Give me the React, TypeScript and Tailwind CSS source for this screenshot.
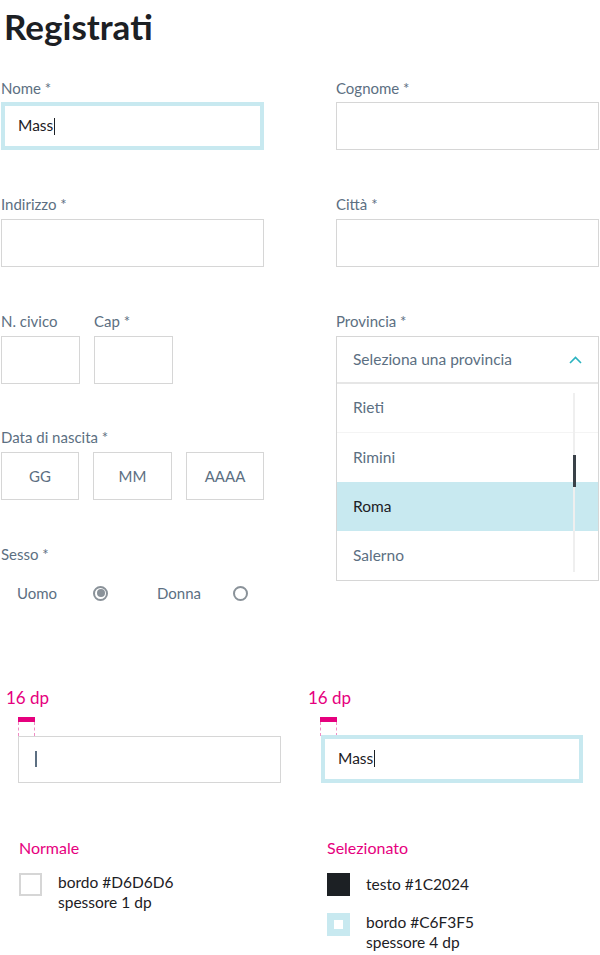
import React from 'react';

const font = { fontFamily: 'Lato, "Noto Sans", sans-serif' };

function Label({ children }: { children: React.ReactNode }) {
  return <div className="h-[20px] text-[15px] leading-[20px] text-[#5c6f82]">{children}</div>;
}

function Box({ className = '', children }: { className?: string; children?: React.ReactNode }) {
  return (
    <div className={`h-[48px] border border-[#d6d6d6] bg-white flex items-center justify-center text-[15px] text-[#5c6f82] ${className}`}>
      {children}
    </div>
  );
}

function Focused({ className = '' }: { className?: string }) {
  return (
    <div className={`h-[48px] border-4 border-[#c8e9f0] bg-white flex items-center px-[13px] text-[15.5px] text-[#1c2024] ${className}`}>
      Mass<span className="ml-[1px] inline-block w-[1px] h-[17px] bg-[#1c2024]" />
    </div>
  );
}

function Radio({ checked }: { checked?: boolean }) {
  return (
    <span className="w-[15px] h-[15px] rounded-full border-2 border-[#8a9299] flex items-center justify-center">
      {checked && <span className="w-[8px] h-[8px] rounded-full bg-[#8a9299]" />}
    </span>
  );
}

function Marker() {
  return (
    <div className="ml-[12px] w-[17px]">
      <div className="h-[5px] bg-[#e6007e]" />
      <div className="h-[14px] border-x border-dashed border-[#f08cc4]" />
    </div>
  );
}

export default function App() {
  const items = ['Rieti', 'Rimini', 'Roma', 'Salerno'];
  return (
    <div className="w-[600px] h-[955px] bg-white overflow-hidden" style={font}>
      <h1 className="pl-[4px] pt-[6px] h-[78px] text-[35px] leading-[40px] font-bold text-[#1c2024]">Registrati</h1>

      <div className="grid grid-cols-[263px_263px] gap-x-[72px] pl-[1px]">
        {/* row 1 */}
        <div className="h-[116px]">
          <Label>Nome *</Label>
          <Focused className="mt-[4px]" />
        </div>
        <div className="h-[116px]">
          <Label>Cognome *</Label>
          <Box className="mt-[4px]" />
        </div>

        {/* row 2 */}
        <div className="h-[117px]">
          <Label>Indirizzo *</Label>
          <Box className="mt-[5px]" />
        </div>
        <div className="h-[117px]">
          <Label>Città *</Label>
          <Box className="mt-[5px]" />
        </div>

        {/* row 3 + 4 + 5 left */}
        <div>
          <div className="h-[116px]">
            <div className="flex gap-[14px]">
              <div className="w-[79px]">
                <Label>N. civico</Label>
                <Box className="mt-[5px]" />
              </div>
              <div className="w-[79px]">
                <Label>Cap *</Label>
                <Box className="mt-[5px]" />
              </div>
            </div>
          </div>
          <div className="h-[117px]">
            <Label>Data di nascita *</Label>
            <div className="mt-[5px] flex gap-[14px]">
              <Box className="w-[78px]">GG</Box>
              <Box className="w-[79px]">MM</Box>
              <Box className="w-[78px]">AAAA</Box>
            </div>
          </div>
          <div>
            <Label>Sesso *</Label>
            <div className="mt-[18px] flex items-center text-[15px] text-[#5c6f82] pl-[16px]">
              <span className="w-[76px]">Uomo</span>
              <Radio checked />
              <span className="ml-[49px] w-[76px]">Donna</span>
              <Radio />
            </div>
          </div>
        </div>

        {/* provincia */}
        <div>
          <Label>Provincia *</Label>
          <div className="mt-[5px] border border-[#d6d6d6] bg-white">
            <div className="h-[47px] flex items-center justify-between pl-[16px] pr-[16px] text-[15.5px] text-[#5c6f82] border-b-2 border-[#e6e6e6]">
              <span>Seleziona una provincia</span>
              <svg width="13" height="8" viewBox="0 0 13 8" fill="none">
                <path d="M1 7 L6.5 1.5 L12 7" stroke="#2bb3c0" strokeWidth="1.6" />
              </svg>
            </div>
            <div className="relative">
              {items.map((it, i) => (
                <div
                  key={it}
                  className={`h-[49px] flex items-center pl-[16px] text-[15.5px] ${
                    it === 'Roma' ? 'bg-[#c8e9f0] text-[#1c2024]' : 'text-[#5c6f82]'
                  } ${i === 0 ? 'border-b border-[#f4f4f4]' : ''}`}
                >
                  {it}
                </div>
              ))}
              <div className="absolute right-[23px] top-[9px] bottom-[8px] w-[2px] bg-[#efefef]">
                <div className="absolute left-[-0.5px] top-[62px] w-[3px] h-[32px] bg-[#3a4148]" />
              </div>
            </div>
          </div>
        </div>
      </div>

      {/* spec */}
      <div className="mt-[83px] grid grid-cols-[301px_299px]">
        <div className="pl-[6px]">
          <div className="text-[17px] leading-[20px] text-[#e6007e]">16 dp</div>
          <div className="mt-[9px]">
            <Marker />
          </div>
          <div className="ml-[12px] w-[263px] h-[47px] border border-[#d6d6d6] flex items-center pl-[16px]">
            <span className="w-[2px] h-[16px] bg-[#5c6f82]" />
          </div>
        </div>
        <div className="pl-[7px]">
          <div className="text-[17px] leading-[20px] text-[#e6007e]">16 dp</div>
          <div className="mt-[9px]">
            <Marker />
          </div>
          <Focused className="ml-[13px] w-[262px] -mt-[1px]" />
        </div>
      </div>

      <div className="mt-[55px] grid grid-cols-[308px_292px] text-[15.5px] text-[#1c2024]">
        <div className="pl-[19px]">
          <div className="text-[16px] leading-[20px] text-[#e6007e]">Normale</div>
          <div className="mt-[15px] flex">
            <span className="w-[23px] h-[23px] border-2 border-[#d6d6d6]" />
            <div className="ml-[16px] leading-[20px] -mt-[1px]">
              <div>bordo #D6D6D6</div>
              <div>spessore 1 dp</div>
            </div>
          </div>
        </div>
        <div className="pl-[19px]">
          <div className="text-[16px] leading-[20px] text-[#e6007e]">Selezionato</div>
          <div className="mt-[15px] flex items-start">
            <span className="w-[23px] h-[23px] bg-[#1c2024]" />
            <div className="ml-[16px] leading-[20px] mt-[1px]">testo #1C2024</div>
          </div>
          <div className="mt-[17px] flex items-start">
            <span className="w-[23px] h-[23px] border-[7px] border-[#c8e9f0] bg-white" />
            <div className="ml-[16px] leading-[20px] -mt-[1px]">
              <div>bordo #C6F3F5</div>
              <div>spessore 4 dp</div>
            </div>
          </div>
        </div>
      </div>
    </div>
  );
}
